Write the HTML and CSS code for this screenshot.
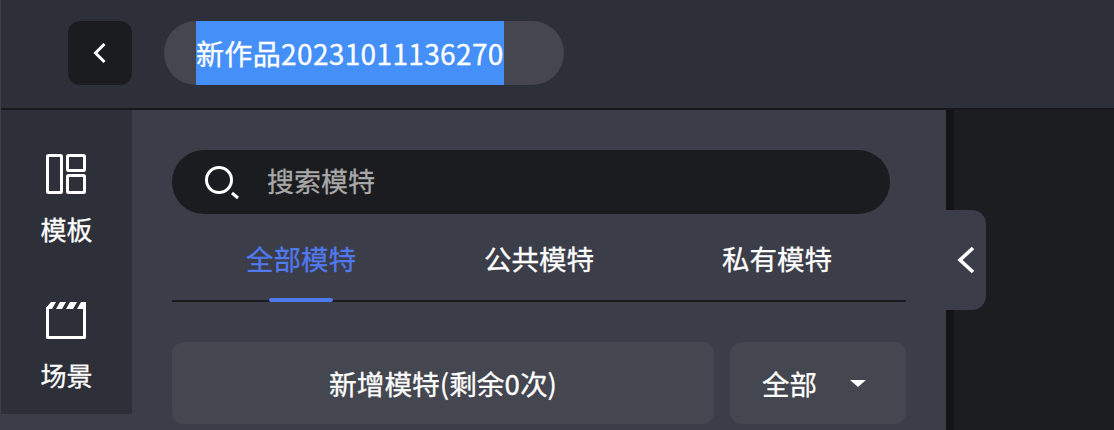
FILE: index.html
```html
<!DOCTYPE html>
<html lang="zh">
<head>
<meta charset="utf-8">
<title>新作品</title>
<link rel="stylesheet" href="styles.css">
</head>
<body>
<div class="app">
  <header class="topbar">
    <button class="back" type="button">
      <svg width="16" height="22" viewBox="0 0 16 22"><path d="M12.500 2 3.500 11l9 9" fill="none" stroke="#fff" stroke-width="3"/></svg>
    </button>
    <div class="title-pill"><span class="title-sel">新作品20231011136270</span></div>
  </header>
  <main class="main">
    <nav class="side">
      <div class="side-item first">
        <svg width="40" height="40" viewBox="0 0 40 40" fill="none" stroke="#fff" stroke-width="3" stroke-linejoin="round"><rect x="1.500" y="1.500" width="14" height="37" rx="1"/><rect x="21.500" y="1.500" width="17" height="15" rx="1"/><rect x="21.500" y="21.500" width="17" height="17" rx="1"/></svg>
        <span>模板</span>
      </div>
      <div class="side-item second">
        <svg width="40" height="37" viewBox="0 0 40 37"><path d="M1.500 5v30.500h37V5" fill="none" stroke="#fff" stroke-width="3" stroke-linejoin="round"/><path d="M5 0h5L6 7H0V6zM14 0h6l-4 7h-6zM24 0h7l-4 7h-7zM35 0h5v7h-9z" fill="#fff"/></svg>
        <span class="scene-label">场景</span>
      </div>
    </nav>
    <section class="panel">
      <div class="search">
        <svg class="search-icon" width="36" height="36" viewBox="0 0 36 36" fill="none" stroke="#fff" stroke-width="3"><circle cx="15" cy="16" r="12.500"/><path d="m28 29 6 5"/></svg>
        <span class="placeholder">搜索模特</span>
      </div>
      <div class="tabs">
        <div class="tab active">全部模特</div>
        <div class="tab">公共模特</div>
        <div class="tab">私有模特</div>
      </div>
      <div class="actions">
        <div class="btn add">新增模特(剩余0次)</div>
        <div class="btn filter"><span>全部</span><i class="caret"></i></div>
      </div>
    </section>
    <div class="canvas"></div>
    <div class="toggle">
      <svg width="20" height="28" viewBox="0 0 20 28"><path d="M17 2 4 14l13 12" fill="none" stroke="#fff" stroke-width="3.600"/></svg>
    </div>
  </main>
</div>
</body>
</html>
```
FILE: styles.css
```css
* { box-sizing: border-box; }
html, body { margin: 0; height: 100%; overflow: hidden; }
body {
  background: #3b3d48;
  color: #fff;
  font-family: "Noto Sans CJK SC", "Noto Sans", sans-serif;
  font-weight: 400;
  -webkit-text-stroke: 0.3px currentColor;
}
.app { display: flex; flex-direction: column; height: 430px; border-left: 1px solid #3b3d48; }
.topbar {
  height: 110px;
  flex: none;
  display: flex;
  align-items: flex-start;
  gap: 32px;
  padding: 21px 0 0 67px;
  background: #2e3039;
  border-bottom: 2px solid #17181b;
}
.back {
  width: 64px; height: 64px;
  padding: 0; border: 0;
  display: flex; align-items: center; justify-content: center;
  background: #1b1c20;
  border-radius: 12px;
}
.title-pill {
  width: 400px; height: 64px;
  padding-left: 32px;
  background: #45464f;
  border-radius: 32px;
}
.title-sel {
  display: inline-block;
  height: 64px;
  line-height: 64px;
  font-size: 28px;
  letter-spacing: 0.36px;
  background: #4590f8;
  white-space: nowrap;
}
.main { flex: 1; display: flex; position: relative; min-height: 0; }
.side {
  width: 131px; height: 304px; flex: none;
  background: #2e3039;
  display: flex; flex-direction: column; align-items: center;
}
.side-item { display: flex; flex-direction: column; align-items: center; }
.side-item.first { padding-top: 44px; }
.side-item.second { padding-top: 55px; }
.side-item svg { display: block; }
.side-item span { font-size: 26px; line-height: 36px; margin-top: 17px; }
.side-item .scene-label { margin-top: 18px; }
.panel {
  width: 814px; flex: none;
  padding: 40px 40px 0;
  background: #3b3d48;
}
.search {
  width: 718px; height: 64px;
  display: flex; align-items: center;
  padding-left: 32px;
  background: #1b1c20;
  border-radius: 32px;
}
.search-icon { flex: none; }
.placeholder { margin-left: 27px; margin-top: -3px; font-size: 27px; color: #a8a8a8; }
.tabs {
  display: flex;
  height: 88px;
  padding: 0 10px;
  border-bottom: 2px solid #1b1c20;
}
.tab {
  flex: 1;
  position: relative;
  text-align: center;
  font-size: 27.500px;
  line-height: 88px;
}
.tab.active { color: #5079ee; }
.tab.active::after {
  content: "";
  position: absolute;
  left: 50%; bottom: -2px;
  width: 64px; height: 4px;
  margin-left: -32px;
  background: #5079ee;
  border-radius: 2px;
}
.actions { display: flex; gap: 16px; margin-top: 40px; }
.btn {
  height: 82px;
  display: flex; align-items: center;
  background: #444650;
  border-radius: 12px;
  font-size: 27.500px;
}
.add { width: 542px; justify-content: center; font-size: 27.700px; }
.filter { width: 176px; padding-left: 32px; }
.caret {
  margin-left: 33px;
  width: 0; height: 0;
  border-left: 8px solid transparent;
  border-right: 8px solid transparent;
  border-top: 7px solid #fff;
}
.canvas { flex: 1; background: #1c1d21; border-left: 8px solid #141416; }
.toggle {
  position: absolute;
  left: 945px; top: 100px;
  width: 40px; height: 100px;
  display: flex; align-items: center; justify-content: flex-end;
  padding-right: 10px;
  background: #3b3d48;
  border-radius: 0 14px 14px 0;
}
```
